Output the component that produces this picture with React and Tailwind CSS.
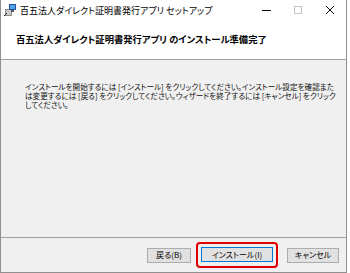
import React from 'react';

const JP = "font-['Noto_Sans_CJK_JP','Noto_Sans',sans-serif] [font-feature-settings:'palt']";

function SetupIcon() {
  return (
    <svg width="13" height="14" viewBox="0 0 13 14">
      <rect x="1" y="6" width="7" height="7" fill="#8a8a8a" />
      <rect x="2" y="7" width="5" height="5" fill="#c9c9c9" />
      <rect x="5" y="1" width="7" height="6" fill="#2c4f9e" />
      <rect x="6" y="2" width="5" height="4" fill="#4fa3e8" />
      <rect x="7" y="7" width="3" height="2" fill="#555" />
      <path d="M0 13 L3 10" stroke="#333" strokeWidth="1" />
    </svg>
  );
}

function Btn({ children, focused }) {
  return (
    <button
      className={`h-[15px] flex items-center justify-center text-[8px] leading-none text-black bg-[#e1e1e1] border whitespace-nowrap ${
        focused ? 'border-[#0078d7] w-[72px]' : 'border-[#adadad] w-full'
      }`}
    >
      {children}
    </button>
  );
}

export default function App() {
  return (
    <div className={`w-[350px] h-[273px] bg-white ${JP}`}>
      <div className="w-[347px] h-[273px] border-l border-r border-b border-[#8f8f8f] flex flex-col">
        {/* タイトルバー */}
        <div className="h-[20px] flex items-center bg-white">
          <div className="ml-[3px] mr-[3px] flex items-center">
            <SetupIcon />
          </div>
          <span className="text-[9px] leading-none text-black">百五法人ダイレクト証明書発行アプリ セットアップ</span>
          <div className="ml-auto flex items-center">
            <div className="w-[32px] flex justify-center">
              <div className="w-[9px] h-px bg-black" />
            </div>
            <div className="w-[32px] flex justify-center">
              <div className="w-[8px] h-[8px] border border-[#c4c4c4]" />
            </div>
            <div className="w-[32px] flex justify-center">
              <svg width="10" height="10" viewBox="0 0 10 10">
                <path d="M1 1 L9 9 M9 1 L1 9" stroke="#111" strokeWidth="1" />
              </svg>
            </div>
          </div>
        </div>

        {/* ヘッダー */}
        <div className="h-[39px] flex items-center pl-[15px] bg-white">
          <span className="text-[9.3px] font-bold leading-none text-black whitespace-nowrap">
            百五法人ダイレクト証明書発行アプリ のインストール準備完了
          </span>
        </div>
        <div className="h-px bg-[#a0a0a0]" />

        {/* 本文 */}
        <div className="flex-1 bg-[#f0f0f0] pl-[24px] pt-[22px]">
          <div className="text-[7.6px] leading-[9px] text-[#111] whitespace-nowrap">
            <p>インストールを開始するには [インストール] をクリックしてください。インストール設定を確認また</p>
            <p>は変更するには [戻る] をクリックしてください。ウィザードを終了するには [キャンセル] をクリック</p>
            <p>してください。</p>
          </div>
        </div>
        <div className="h-px bg-[#a0a0a0]" />

        {/* ボタン */}
        <div className="h-[34px] bg-[#f0f0f0] flex items-center justify-end pr-[7px]">
          <div className="w-[44px]">
            <Btn>戻る(B)</Btn>
          </div>
          <div className="ml-[5px] border-2 border-[#e00000] rounded-[4px] px-[3px] pt-[3px] pb-[4px]">
            <Btn focused>インストール(I)</Btn>
          </div>
          <div className="ml-[9px] w-[52px]">
            <Btn>キャンセル</Btn>
          </div>
        </div>
      </div>
    </div>
  );
}
